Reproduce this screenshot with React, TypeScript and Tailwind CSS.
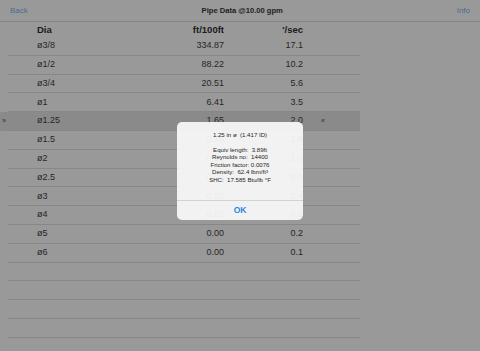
import React from 'react';

type Row = {
    dia: string;
    ft: string;
    sec: string;
    selected?: boolean;
};

const rows: Row[] = [
    { dia: 'ø3/8', ft: '334.87', sec: '17.1' },
    { dia: 'ø1/2', ft: '88.22', sec: '10.2' },
    { dia: 'ø3/4', ft: '20.51', sec: '5.6' },
    { dia: 'ø1', ft: '6.41', sec: '3.5' },
    { dia: 'ø1.25', ft: '1.65', sec: '2.0', selected: true },
    { dia: 'ø1.5', ft: '0.76', sec: '1.6' },
    { dia: 'ø2', ft: '0.23', sec: '1.0' },
    { dia: 'ø2.5', ft: '0.09', sec: '0.6' },
    { dia: 'ø3', ft: '0.03', sec: '0.4' },
    { dia: 'ø4', ft: '0.01', sec: '0.2' },
    { dia: 'ø5', ft: '0.00', sec: '0.2' },
    { dia: 'ø6', ft: '0.00', sec: '0.1' },
    { dia: '', ft: '', sec: '' },
    { dia: '', ft: '', sec: '' },
    { dia: '', ft: '', sec: '' },
    { dia: '', ft: '', sec: '' },
    { dia: '', ft: '', sec: '' },
];

const App = () => {
    return (
        <div
            className="relative w-[480px] h-[351px] overflow-hidden bg-[#999999] text-[#262626]"
            style={{ fontFamily: '"Liberation Sans", Arial, sans-serif' }}
        >
            {/* nav bar */}
            <div className="flex items-center justify-between h-[22px] px-[10px] border-b border-[#858585]">
                <span className="text-[8px] text-[#4b6d97]">Back</span>
                <span className="text-[7.6px] font-bold text-[#1e1e1e]">Pipe Data @10.00 gpm</span>
                <span className="text-[8px] text-[#4b6d97]">Info</span>
            </div>

            {/* table */}
            <div className="w-[360px]">
                <div className="flex items-end h-[15px] pl-[37px] text-[9.5px] font-bold text-[#1a1a1a]">
                    <span className="w-[120px]">Dia</span>
                    <span className="w-[67px] text-right">ft/100ft</span>
                    <span className="w-[79px] text-right">'/sec</span>
                </div>

                {rows.map((row, i) => (
                    <div
                        key={i}
                        className={`flex h-[18.8px] ${row.selected ? 'bg-[#8a8a8a]' : ''}`}
                    >
                        <span className="w-[8px] flex items-center justify-center text-[7px] text-[#2a2a2a]">
                            {row.selected ? '»' : ''}
                        </span>
                        <div className="flex flex-1 items-center pl-[29px] text-[9px] border-b border-[#878787]">
                            <span className="w-[120px]">{row.dia}</span>
                            <span className="w-[67px] text-right">{row.ft}</span>
                            <span className="w-[79px] text-right">{row.sec}</span>
                            {row.selected && (
                                <span className="ml-[18px] text-[7px] text-[#2a2a2a]">«</span>
                            )}
                        </div>
                    </div>
                ))}
            </div>

            {/* alert */}
            <div className="absolute inset-0 flex items-center justify-center pb-[9px]">
                <div className="w-[126px] rounded-[5px] bg-[#f8f8f8]/[0.94] flex flex-col text-[#1e1e1e]">
                    <div className="flex flex-col items-center pt-[8.5px] pb-[16.5px] text-[6.1px] leading-[7.4px]">
                        <span className="mb-[7.6px]">1.25 in ø&nbsp;&nbsp;(1.417 ID)</span>
                        <span>Equiv length:&nbsp;&nbsp;3.89ft</span>
                        <span>Reynolds no:&nbsp;&nbsp;14400</span>
                        <span>Friction factor: 0.0076</span>
                        <span>Density:&nbsp;&nbsp;62.4 lbm/ft³</span>
                        <span>SHC:&nbsp;&nbsp;17.585 Btu/lb °F</span>
                    </div>
                    <div className="flex items-center justify-center h-[20px] border-t border-[#d2d2d2] text-[8.5px] font-bold text-[#2f86e0]">
                        OK
                    </div>
                </div>
            </div>
        </div>
    );
};

export default App;
